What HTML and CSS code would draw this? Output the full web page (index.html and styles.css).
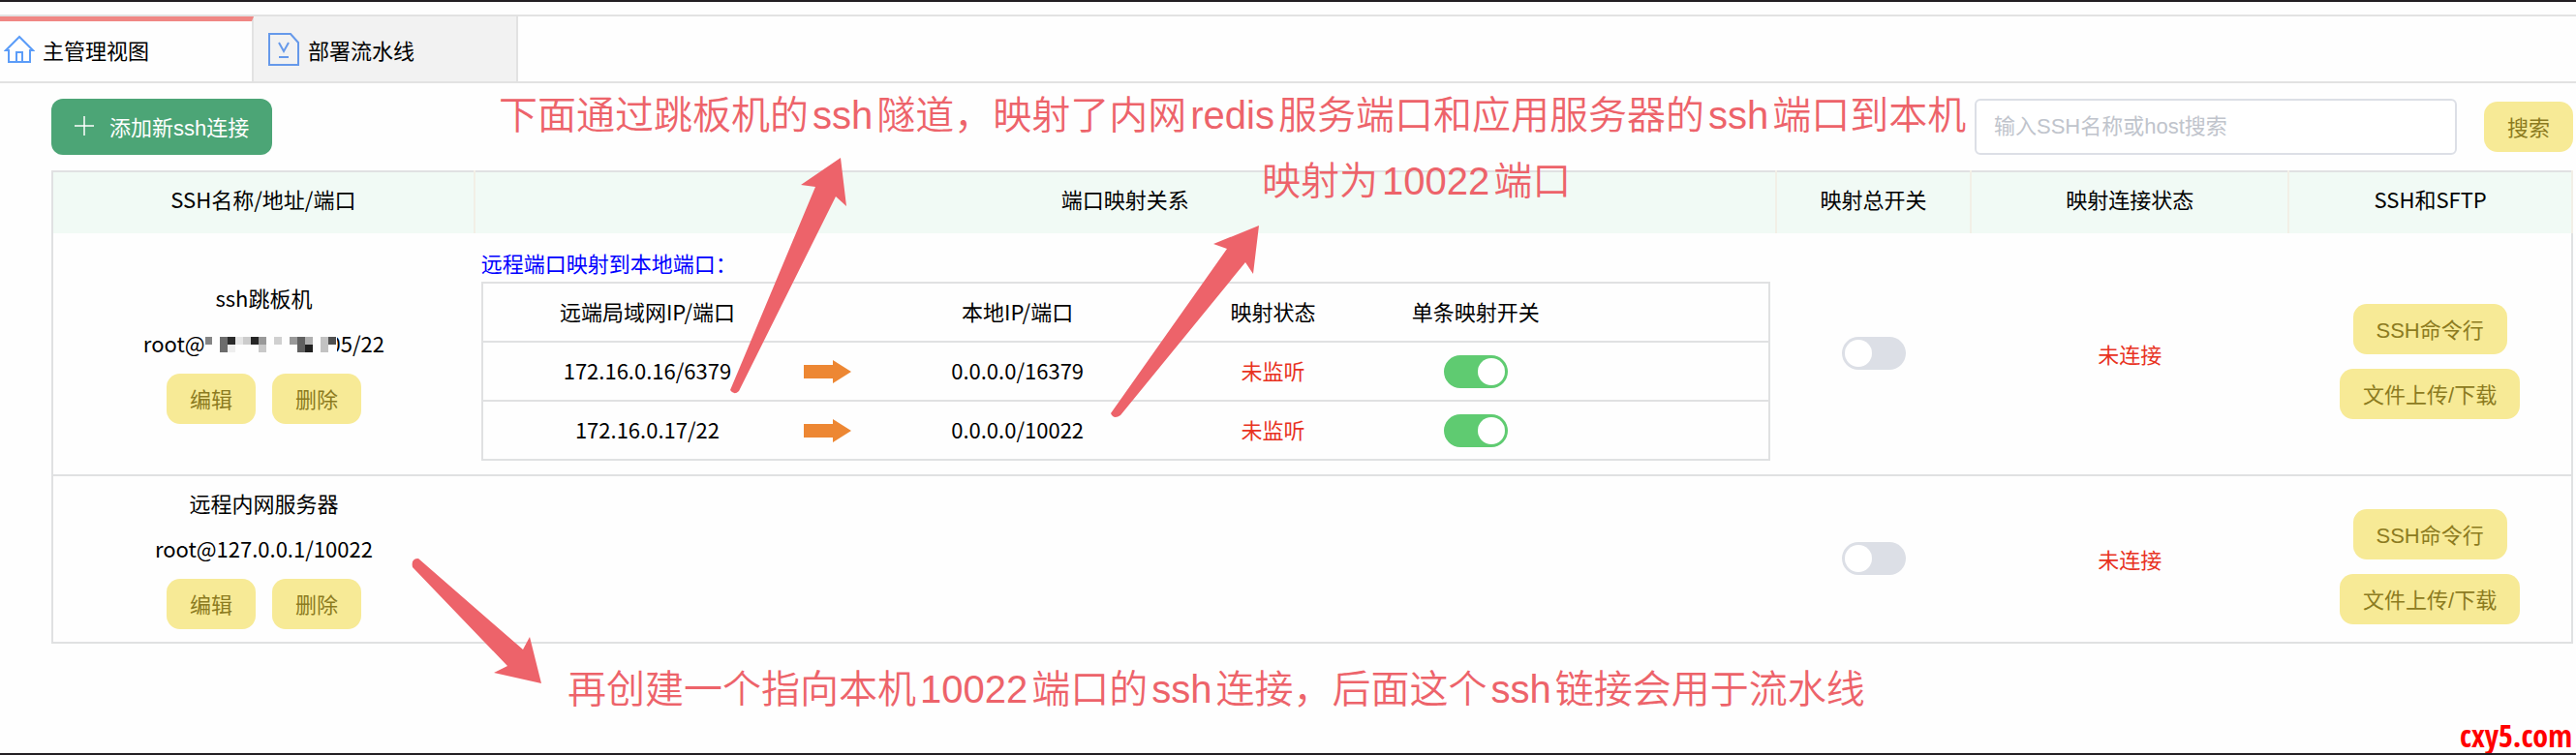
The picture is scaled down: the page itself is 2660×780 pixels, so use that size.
FILE: index.html
```html
<!DOCTYPE html>
<html lang="zh-CN">

<head>
  <meta charset="UTF-8">
  <meta name="viewport" content="width=device-width, initial-scale=1.0">
  <title>主管理视图</title>
  <link rel="stylesheet" href="styles.css">
</head>

<body>
  <nav class="tabs">
    <a href="#main" class="tab active">
      <svg class="icon-home" width="32" height="32" viewBox="0 0 32 32">
        <path d="M16 3 L2 17 H5 V29 H27 V17 H30 Z M13 29 V19 H19 V29" />
      </svg>
      主管理视图
    </a>
    <a href="#pipeline" class="tab">
      <svg class="icon-doc" width="34" height="36" viewBox="0 0 34 36">
        <path d="M2 2 H24 L32 11 V34 H2 Z" />
        <path d="M12 11 L17 20 L22 11 M12 26 H22" />
      </svg>
      部署流水线
    </a>
  </nav>

  <main class="content" id="main">
    <div class="toolbar">
      <button class="btn-add">
        <svg width="20" height="20" viewBox="0 0 20 20"><path d="M10 0 V20 M0 10 H20" /></svg>
        添加新ssh连接
      </button>
      <form class="search">
        <input type="text" class="search-input" placeholder="输入SSH名称或host搜索" aria-label="输入SSH名称或host搜索">
        <button type="button" class="btn">搜索</button>
      </form>
    </div>

    <table class="list">
      <colgroup>
        <col class="c-name">
        <col class="c-map">
        <col class="c-switch">
        <col class="c-state">
        <col class="c-ssh">
      </colgroup>
      <thead>
        <tr>
          <th>SSH名称/地址/端口</th>
          <th>端口映射关系</th>
          <th>映射总开关</th>
          <th>映射连接状态</th>
          <th>SSH和SFTP</th>
        </tr>
      </thead>
      <tbody>
        <tr>
          <td>
            <p>ssh跳板机</p>
            <p>root@<svg class="mosaic" width="136" height="24" viewBox="0 0 136 24">
                <rect width="136" height="24" fill="#fefefe" />
                <rect x="0" y="0" width="7" height="8" fill="#858585" />
                <rect x="15" y="0" width="8" height="16" fill="#6c6c6c" />
                <rect x="23" y="0" width="8" height="8" fill="#2b2b2b" />
                <rect x="23" y="8" width="8" height="8" fill="#eeeeee" />
                <rect x="31" y="0" width="8" height="8" fill="#e6e6e6" />
                <rect x="39" y="0" width="8" height="8" fill="#cccccc" />
                <rect x="47" y="0" width="8" height="8" fill="#252525" />
                <rect x="55" y="0" width="8" height="8" fill="#999999" />
                <rect x="55" y="8" width="8" height="8" fill="#c9c9c9" />
                <rect x="71" y="0" width="8" height="8" fill="#d0d0d0" />
                <rect x="87" y="0" width="8" height="8" fill="#999999" />
                <rect x="95" y="0" width="8" height="16" fill="#606060" />
                <rect x="103" y="0" width="8" height="8" fill="#b0b0b0" />
                <rect x="103" y="8" width="8" height="8" fill="#202020" />
                <rect x="119" y="0" width="8" height="16" fill="#c2c2c2" />
                <rect x="127" y="0" width="8" height="8" fill="#505050" />
              </svg>05/22</p>
            <div class="actions">
              <button class="btn">编辑</button>
              <button class="btn">删除</button>
            </div>
          </td>
          <td class="map-cell">
            <div class="map-title">远程端口映射到本地端口：</div>
            <table class="map">
              <colgroup>
                <col class="m-remote">
                <col class="m-arrow">
                <col class="m-local">
                <col class="m-state">
                <col class="m-switch">
                <col>
              </colgroup>
              <tr>
                <th>远端局域网IP/端口</th>
                <th></th>
                <th>本地IP/端口</th>
                <th>映射状态</th>
                <th>单条映射开关</th>
                <th></th>
              </tr>
              <tr>
                <td>172.16.0.16/6379</td>
                <td><svg class="arrow" width="50" height="26" viewBox="0 0 50 26"><path d="M0 6 H30 V1 L49 13 L30 25 V20 H0 Z" /></svg></td>
                <td>0.0.0.0/16379</td>
                <td class="off">未监听</td>
                <td><input type="checkbox" class="switch" aria-label="单条映射开关 16379" checked></td>
                <td></td>
              </tr>
              <tr>
                <td>172.16.0.17/22</td>
                <td><svg class="arrow" width="50" height="26" viewBox="0 0 50 26"><path d="M0 6 H30 V1 L49 13 L30 25 V20 H0 Z" /></svg></td>
                <td>0.0.0.0/10022</td>
                <td class="off">未监听</td>
                <td><input type="checkbox" class="switch" aria-label="单条映射开关 10022" checked></td>
                <td></td>
              </tr>
            </table>
          </td>
          <td><input type="checkbox" class="switch" aria-label="映射总开关 ssh跳板机"></td>
          <td class="off">未连接</td>
          <td>
            <div class="ssh-actions">
              <button class="btn">SSH命令行</button>
              <button class="btn">文件上传/下载</button>
            </div>
          </td>
        </tr>
        <tr>
          <td>
            <p>远程内网服务器</p>
            <p>root@127.0.0.1/10022</p>
            <div class="actions">
              <button class="btn">编辑</button>
              <button class="btn">删除</button>
            </div>
          </td>
          <td></td>
          <td><input type="checkbox" class="switch" aria-label="映射总开关 远程内网服务器"></td>
          <td class="off">未连接</td>
          <td>
            <div class="ssh-actions">
              <button class="btn">SSH命令行</button>
              <button class="btn">文件上传/下载</button>
            </div>
          </td>
        </tr>
      </tbody>
    </table>
  </main>

  <!-- notes drawn over the page -->
  <svg class="note-arrows" width="1400" height="760" viewBox="0 0 1400 760">
    <path d="M868 163 L874 213 L863 203 L763 404 Q758 409 754 403 L842 193 L827 191 Z" />
    <path d="M1300 233 L1294 283 L1286 271 L1157 429 Q1150 434 1147 427 L1267 257 L1253 252 Z" />
    <path d="M559 706 L510 695 L524 688 L426 586 Q424 577 432 577 L540 671 L547 658 Z" />
  </svg>
  <div class="note note-tunnel">下面通过跳板机的<span>ssh</span>隧道，映射了内网<span>redis</span>服务端口和应用服务器的<span>ssh</span>端口到本机</div>
  <div class="note note-port">映射为<span>10022</span>端口</div>
  <div class="note note-local">再创建一个指向本机<span>10022</span>端口的<span>ssh</span>连接，后面这个<span>ssh</span>链接会用于流水线</div>
  <div class="watermark">cxy5.com</div>
</body>

</html>
```
FILE: styles.css
```css
* {
  box-sizing: border-box;
  margin: 0;
  padding: 0;
}

body {
  position: relative;
  min-height: 100vh;
  padding-top: 13px;
  border-top: 2px solid #231f23;
  border-bottom: 2px solid #231f23;
  background: #fefefe;
  color: #000;
  font-family: "Noto Sans CJK SC", sans-serif;
  font-size: 22px;
}

svg {
  flex: none;
}

/* tabs */
.tabs {
  display: flex;
  height: 71px;
  border-top: 2px solid #e2e2e2;
  border-bottom: 2px solid #e2e2e2;
}

.tab {
  display: flex;
  align-items: center;
  gap: 8px;
  width: 273px;
  padding-left: 14px;
  border-right: 2px solid #e2e2e2;
  background: #f2f2f2;
  color: #000;
  text-decoration: none;
}

.tab.active {
  width: 262px;
  padding-left: 4px;
  padding-bottom: 5px;
  border-top: 5px solid #f08784;
  background: #fefefe;
}

.icon-home,
.icon-doc {
  fill: none;
  stroke: #5b9cf8;
  stroke-width: 2;
}

.icon-doc {
  stroke: #6699ea;
}

/* toolbar */
.content {
  padding: 16px 3px 0 53px;
}

.toolbar {
  display: flex;
  align-items: center;
  justify-content: space-between;
  margin-bottom: 16px;
}

button {
  border: none;
  font-family: "Liberation Sans", "Noto Sans CJK SC", sans-serif;
  font-size: 22px;
  cursor: pointer;
}

.btn-add {
  display: flex;
  align-items: center;
  gap: 16px;
  height: 58px;
  padding: 0 24px 2px;
  border-radius: 12px;
  background: #4ca576;
  color: #fff;
}

.btn-add svg {
  stroke: #fff;
  stroke-width: 1.5;
}

.search {
  display: flex;
  align-items: center;
  gap: 28px;
}

.search-input {
  width: 498px;
  height: 58px;
  padding: 0 18px;
  border: 2px solid #dcdfe6;
  border-radius: 6px;
  background: #fff;
  font-family: "Liberation Sans", "Noto Sans CJK SC", sans-serif;
  font-size: 22px;
}

.search-input::placeholder {
  color: #c0c4cc;
}

.btn {
  height: 52px;
  padding: 0 24px 2px;
  border-radius: 14px;
  background: #f7ea96;
  color: #8c7b1f;
}

/* connection list */
table {
  width: 100%;
  border-collapse: collapse;
  table-layout: fixed;
}

th {
  font-weight: normal;
}

th,
td {
  text-align: center;
  vertical-align: middle;
}

.c-name { width: 16.75%; }
.c-map { width: 51.65%; }
.c-switch { width: 7.75%; }
.c-state { width: 12.6%; }
.c-ssh { width: 11.25%; }

.list {
  border: 2px solid #e0e1e2;
}

.list > thead th {
  height: 64px;
  padding-bottom: 9px;
  border-right: 2px solid #f2efe6;
  background: #f1faf5;
}

.list > tbody > tr {
  border-bottom: 2px solid #e0e1e2;
}

.list > tbody > tr > td {
  padding: 4px 0 5px;
}

.list p {
  padding-bottom: 1px;
  line-height: 46px;
}

.mosaic {
  position: relative;
  margin-right: -8px;
  vertical-align: -8px;
}

.actions {
  display: flex;
  justify-content: center;
  gap: 17px;
  padding: 8px 0;
}

.ssh-actions {
  display: flex;
  flex-direction: column;
  align-items: center;
  gap: 15px;
  padding-top: 16px;
}

.off {
  color: #e8321f;
}

/* port map inside a row */
.list > tbody > tr > .map-cell {
  padding: 12px 6px 14px 7px;
}

.map-title {
  padding-bottom: 2px;
  color: #00f;
  line-height: 36px;
  text-align: left;
}

.m-remote { width: 25%; }
.m-arrow { width: 4%; }
.m-local { width: 25.2%; }
.m-state { width: 14.5%; }
.m-switch { width: 17%; }

.map {
  border: 2px solid #e0e1e2;
}

.map tr {
  height: 61px;
  border-bottom: 2px solid #e0e1e2;
}

.map th,
.map td {
  padding-bottom: 4px;
}

.map td:first-child,
.map th:first-child {
  padding-left: 8px;
}

.arrow {
  display: block;
  margin-top: 4px;
  fill: #ed8733;
}

.switch {
  display: block;
  width: 66px;
  height: 34px;
  margin: 0 auto;
  padding: 3px;
  border-radius: 17px;
  background: #dcdfe6;
  appearance: none;
}

.map .switch {
  margin-top: 4px;
}

.switch::before {
  content: '';
  display: block;
  width: 28px;
  height: 28px;
  border-radius: 50%;
  background: #fff;
}

.switch:checked {
  background: #5fcb71;
}

.switch:checked::before {
  margin-left: auto;
}

/* notes */
.note-arrows {
  position: absolute;
  top: -2px;
  left: 0;
  fill: #ed636a;
  pointer-events: none;
}

.note {
  position: absolute;
  color: #ed636a;
  font-family: "Liberation Sans", "Noto Sans CJK SC", sans-serif;
  font-size: 40px;
  font-weight: 350;
  line-height: 60px;
  white-space: nowrap;
}

.note span {
  margin: 0 4px;
}

.note-tunnel {
  top: 87px;
  left: 515px;
}

.note-port {
  top: 155px;
  left: 1303px;
}

.note-local {
  top: 680px;
  left: 586px;
}

.watermark {
  position: absolute;
  right: 4px;
  bottom: 0;
  color: #f00;
  font-family: "Open Sans Condensed", "Roboto Condensed", Roboto, sans-serif;
  font-size: 32px;
  font-weight: 900;
  line-height: 36px;
}
```
